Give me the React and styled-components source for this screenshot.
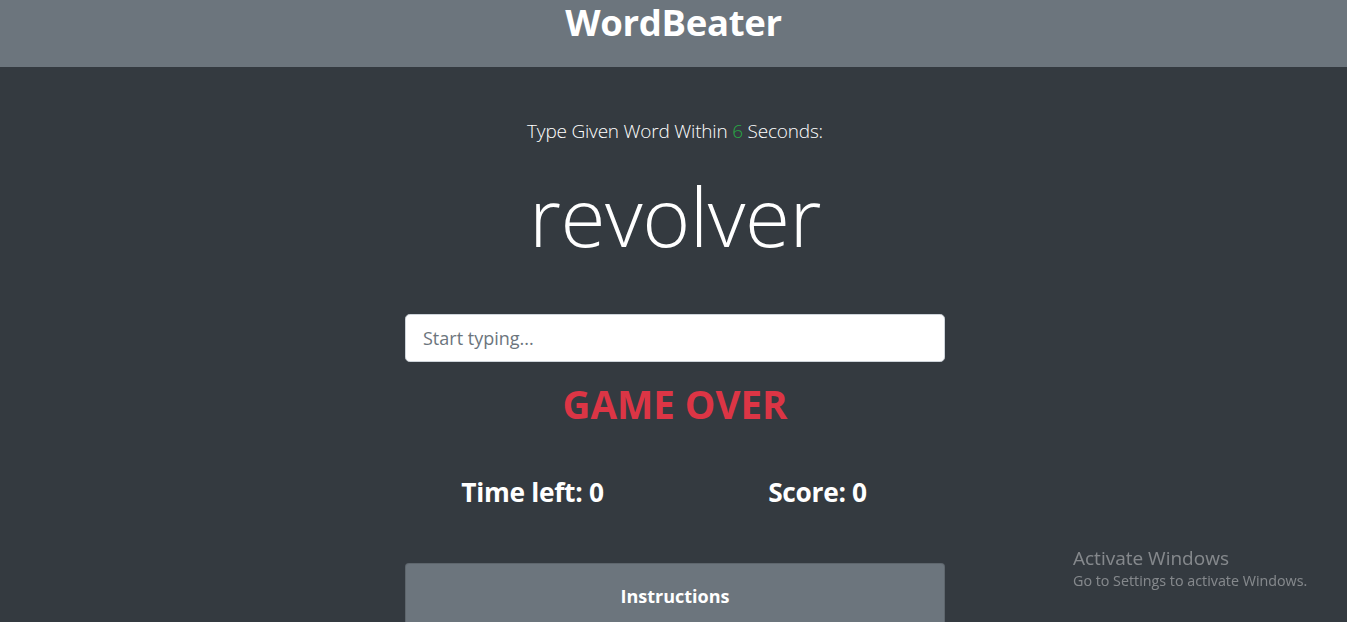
import React from "react";
import styled, { createGlobalStyle } from "styled-components";

const Global = createGlobalStyle`
  html, body { margin: 0; padding: 0; }
  body {
    background: #343a40;
    color: #fff;
    font-family: "Open Sans", "Noto Sans", sans-serif;
    overflow: hidden;
  }
`;

const Header = styled.header`
  height: 67px;
  box-sizing: border-box;
  padding-top: 1px;
  background: #6c757d;
  display: flex;
  justify-content: center;
  align-items: flex-start;
`;

const Title = styled.h1`
  margin: 0;
  font-size: 36.5px;
  font-weight: 700;
  line-height: 42px;
  color: #fff;
  letter-spacing: -0.3px;
`;

const Main = styled.main`
  display: flex;
  flex-direction: column;
  align-items: center;
  padding-top: 52px;
  padding-left: 3px;
`;

const Column = styled.div`
  width: 540px;
  display: flex;
  flex-direction: column;
  align-items: stretch;
`;

const Lead = styled.p`
  margin: 0;
  text-align: center;
  font-size: 19px;
  font-weight: 300;
  line-height: 24px;
  letter-spacing: -0.2px;
`;

const Seconds = styled.span`
  color: #28a745;
`;

const Word = styled.h2`
  margin: 24px 0 0;
  text-align: center;
  font-size: 82px;
  font-weight: 300;
  line-height: 96px;
  letter-spacing: -0.5px;
`;

const Input = styled.input`
  margin-top: 51px;
  height: 48px;
  box-sizing: border-box;
  padding: 8px 17px;
  border: 1px solid #ced4da;
  border-radius: 4.8px;
  background: #fff;
  font-family: inherit;
  font-size: 18px;
  color: #495057;
  outline: none;
  &::placeholder { color: #6c757d; }
`;

const Status = styled.h2`
  margin: 18px 0 0;
  text-align: center;
  color: #dc3545;
  font-size: 38.5px;
  font-weight: 700;
  line-height: 48px;
`;

const Stats = styled.div`
  margin: 47px -15px 0;
  display: grid;
  grid-template-columns: 1fr 1fr;
`;

const Stat = styled.h3`
  margin: 0;
  text-align: center;
  font-size: 26.3px;
  font-weight: 700;
  line-height: 34px;
  letter-spacing: -0.3px;
`;

const Card = styled.div`
  margin-top: 54px;
  background: #6c757d;
  border-radius: 4px;
  border: 1px solid rgba(0,0,0,0.125);
  padding: 20px;
  height: 80px;
  box-sizing: border-box;
  display: flex;
  justify-content: center;
  align-items: flex-start;
`;

const CardTitle = styled.h5`
  margin: 0;
  font-size: 18px;
  font-weight: 700;
  line-height: 24px;
`;

const Watermark = styled.div`
  position: fixed;
  left: 1073px;
  top: 546px;
  color: rgba(255,255,255,0.4);
  font-family: "Open Sans", sans-serif;
`;

const WmTitle = styled.div`
  font-size: 19px;
  line-height: 25px;
`;

const WmSub = styled.div`
  font-size: 14.3px;
  line-height: 20px;
`;

export default function App() {
  return (
    <>
      <Global />
      <Header>
        <Title>WordBeater</Title>
      </Header>
      <Main>
        <Column>
          <Lead>
            Type Given Word Within <Seconds>6</Seconds> Seconds:
          </Lead>
          <Word>revolver</Word>
          <Input placeholder="Start typing..." autoFocus />
          <Status>GAME OVER</Status>
          <Stats>
            <Stat>Time left: 0</Stat>
            <Stat>Score: 0</Stat>
          </Stats>
          <Card>
            <CardTitle>Instructions</CardTitle>
          </Card>
        </Column>
      </Main>
      <Watermark>
        <WmTitle>Activate Windows</WmTitle>
        <WmSub>Go to Settings to activate Windows.</WmSub>
      </Watermark>
    </>
  );
}
